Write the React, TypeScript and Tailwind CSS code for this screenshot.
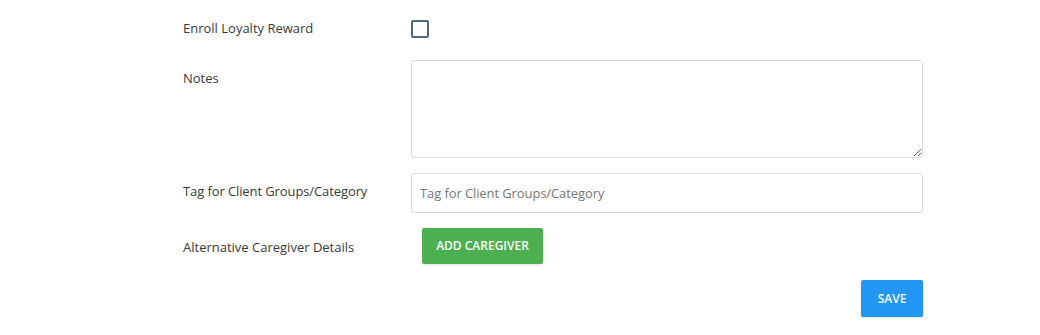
import { useState } from "react";

const labelCls = "text-[13px] text-[#3a3a3a]";

const App = () => {
  const [enroll, setEnroll] = useState(false);
  return (
    <div
      className="w-[1040px] h-[335px] bg-white"
      style={{ fontFamily: '"Open Sans", "Noto Sans", sans-serif' }}
    >
      <div className="pl-[183px] pt-[20px] w-[923px]">
        {/* enroll loyalty */}
        <div className="flex items-center h-[18px]">
          <div className={`${labelCls} w-[228px]`}>Enroll Loyalty Reward</div>
          <button
            onClick={() => setEnroll(!enroll)}
            className="w-[18px] h-[18px] border-2 border-[#4f6b78] rounded-[2px]"
          ></button>
        </div>
        {/* notes */}
        <div className="flex mt-[22px]">
          <div className={`${labelCls} w-[228px] pt-[9px]`}>Notes</div>
          <textarea className="flex-1 h-[98px] border border-[#ddd] rounded-[3px] outline-none px-2 py-2 text-[13px]"></textarea>
        </div>
        {/* tags */}
        <div className="flex mt-[15px]">
          <div className={`${labelCls} w-[228px] pt-[9px] tracking-[-0.1px]`}>Tag for Client Groups/Category</div>
          <input
            placeholder="Tag for Client Groups/Category"
            className="flex-1 h-[40px] border border-[#ddd] rounded-[3px] outline-none px-[8px] text-[13px] tracking-[-0.1px] text-[#333] placeholder:text-[#777]"
          />
        </div>
        {/* caregiver */}
        <div className="flex items-center mt-[15px]">
          <div className={`${labelCls} w-[239px] pt-[3px]`}>Alternative Caregiver Details</div>
          <button className="w-[121px] h-[36px] bg-[#4caf50] rounded-[2px] text-white text-[12px] font-semibold shadow-sm">
            ADD CAREGIVER
          </button>
        </div>
        <div className="flex justify-end mt-[16px]">
          <button className="w-[62px] h-[37px] bg-[#2196f3] rounded-[2px] text-white text-[12px] font-semibold shadow-sm">
            SAVE
          </button>
        </div>
      </div>
    </div>
  );
};

export default App;
